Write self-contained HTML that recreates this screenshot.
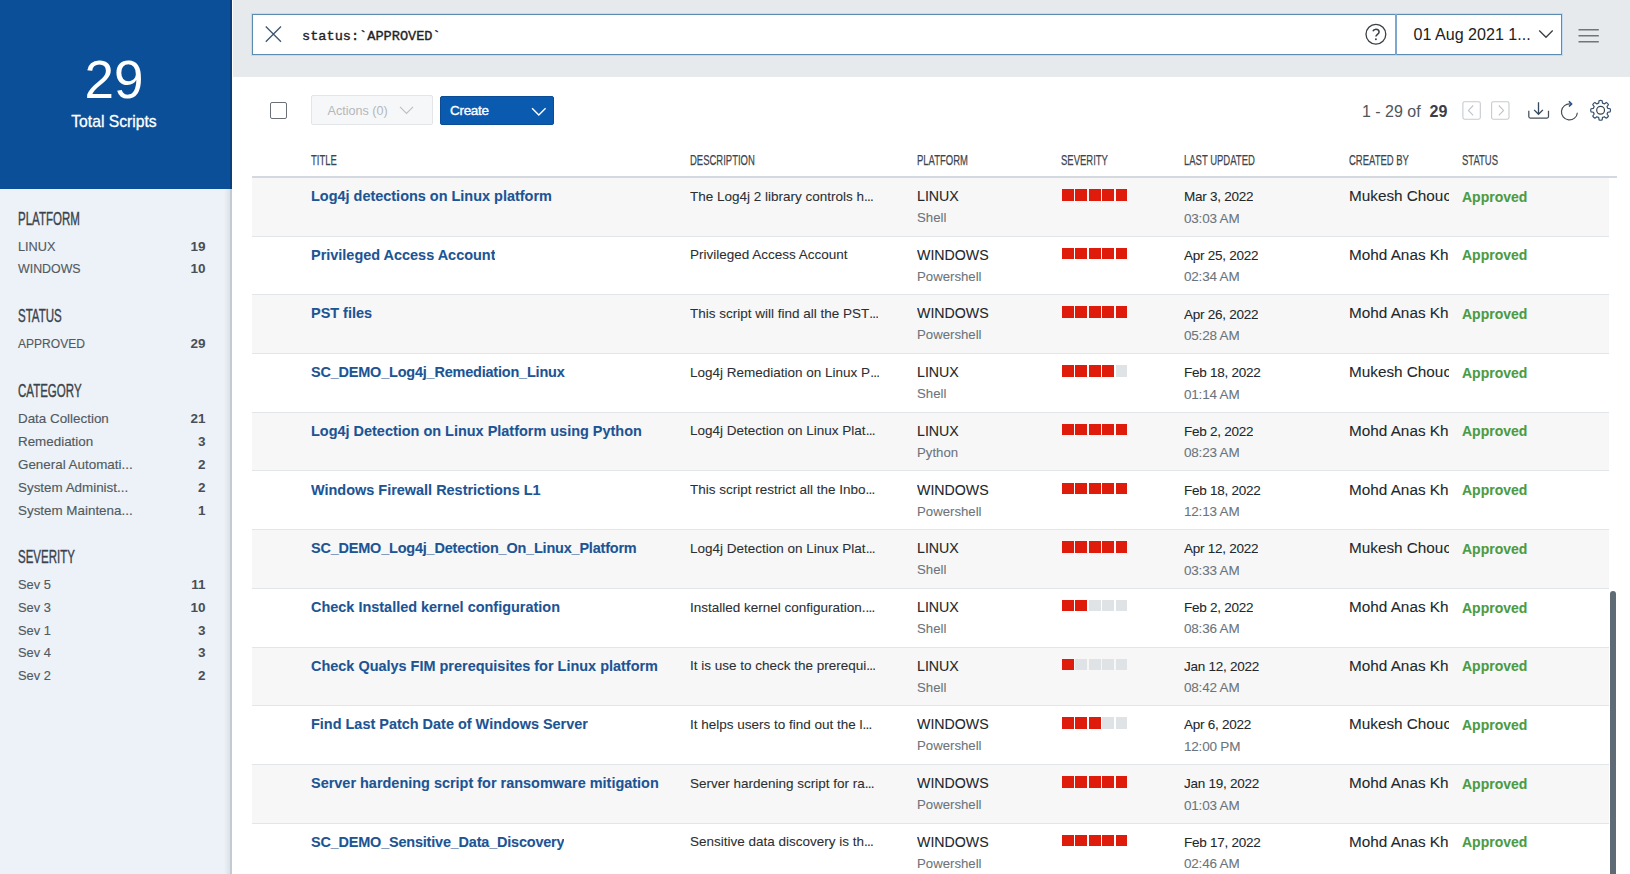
<!DOCTYPE html>
<html><head><meta charset="utf-8">
<style>
*{margin:0;padding:0;box-sizing:border-box}
html,body{width:1630px;height:874px;overflow:hidden;background:#fff;font-family:"Liberation Sans",sans-serif;position:relative}
.abs{position:absolute}
#side{position:absolute;left:0;top:0;width:232px;height:874px;background:#edf2f8}
#sideedge{position:absolute;left:224px;top:189px;width:8px;height:685px;background:linear-gradient(to right,rgba(200,208,216,0),rgba(200,208,216,.45) 70%,#c3cad1 75%,#c3cad1)}
#blueedge{position:absolute;left:230px;top:0;width:2px;height:189px;background:#0a3f7c}
#blue{position:absolute;left:0;top:0;width:232px;height:189px;background:#0b4f98}
#big{position:absolute;left:0;width:228px;top:49.5px;text-align:center;color:#fff;font-size:53px;line-height:60px}
#tot{position:absolute;left:0;width:228px;top:112px;text-align:center;color:#fff;font-size:15.7px;line-height:20px;-webkit-text-stroke:0.3px #fff}
.sh{position:absolute;left:18px;color:#3a434b;font-size:18px;line-height:16px;transform:scaleX(0.64);transform-origin:0 0;-webkit-text-stroke:0.4px #3a434b}
.si{position:absolute;left:18px;color:#525a61;font-size:13.4px;line-height:16px;white-space:nowrap;-webkit-text-stroke:0.15px currentColor}
.sn{position:absolute;left:0;width:205.5px;text-align:right;color:#484f56;font-size:13.5px;font-weight:bold;line-height:16px}
#hdr{position:absolute;left:233px;top:0;width:1397px;height:77px;background:#e7eaed}
#search{position:absolute;left:252px;top:13.5px;width:1310px;height:41.5px;background:#fff;border:1.2px solid #5b8db2;box-shadow:0 0 0 1px rgba(150,205,250,.45)}
#qdiv{position:absolute;left:1395px;top:14px;width:1.8px;height:40.5px;background:#7ea6d0}
#stext{position:absolute;left:302px;top:29px;font-family:"Liberation Mono",monospace;font-size:13.6px;line-height:16px;color:#1e2226;-webkit-text-stroke:0.35px #1e2226}
#date{position:absolute;left:1413.5px;top:24px;font-size:16.1px;line-height:20px;color:#222}
.c{position:absolute;white-space:nowrap;overflow:hidden;line-height:16px;-webkit-text-stroke:0.08px currentColor}
.row{position:absolute;left:252px;width:1357px;height:58.7px;border-bottom:1px solid #e1e6e9}
.row.odd{background:#f7f7f7}
.row.even{background:#fff}
.title{left:59px;top:10px;font-size:14.46px;font-weight:bold;color:#1c5494}
.desc{left:438px;top:10.7px;font-size:13.5px;color:#2b2f33}
.plat{left:665px;top:10px;font-size:14.2px;color:#22272b}
.plat2{left:665px;top:32px;font-size:13.2px;color:#6b747c}
.date{left:932px;top:11.2px;font-size:13.5px;letter-spacing:-0.25px;color:#22272b}
.date2{left:932px;top:32.6px;font-size:13.5px;letter-spacing:-0.2px;color:#6b747c}
.by{left:1097px;top:10px;font-size:15.3px;color:#22272b;width:100px}
.st{left:1210px;top:10.7px;font-size:14px;color:#4b9b44;font-weight:bold}
.sev{position:absolute;left:810px;top:11px;width:70px;height:12px}
.sev i{position:absolute;top:0;width:11.7px;height:11.6px}
.sev i.on{background:#df1b0b}
.sev i.off{background:#dfe3e6}
.th{position:absolute;top:153px;font-size:15.5px;line-height:14px;color:#3c4650;-webkit-text-stroke:0.25px #3c4650;transform:scaleX(0.612);transform-origin:0 0}
#hline{position:absolute;left:252px;top:176px;width:1365px;height:2px;background:#d3d9df}
#scroll{position:absolute;left:1610px;top:591px;width:6px;height:290px;border-radius:3px;background:#5f6b74}
#ov{position:absolute;left:0;top:0}
</style></head><body>
<div id="side"></div>
<div id="blue"></div>
<div id="sideedge"></div><div id="blueedge"></div>
<div id="big">29</div>
<div id="tot">Total Scripts</div>
<div class="sh" style="top:210.5px">PLATFORM</div>
<div class="si" style="top:238.5px;transform:scaleX(0.95);transform-origin:0 0">LINUX</div><div class="sn" style="top:238.5px">19</div>
<div class="si" style="top:261.4px;transform:scaleX(0.925);transform-origin:0 0">WINDOWS</div><div class="sn" style="top:261.4px">10</div>
<div class="sh" style="top:308px">STATUS</div>
<div class="si" style="top:336.1px;transform:scaleX(0.9);transform-origin:0 0">APPROVED</div><div class="sn" style="top:336.1px">29</div>
<div class="sh" style="top:383px">CATEGORY</div>
<div class="si" style="top:411.1px">Data Collection</div><div class="sn" style="top:411.1px">21</div>
<div class="si" style="top:433.9px">Remediation</div><div class="sn" style="top:433.9px">3</div>
<div class="si" style="top:456.8px">General Automati...</div><div class="sn" style="top:456.8px">2</div>
<div class="si" style="top:479.6px">System Administ...</div><div class="sn" style="top:479.6px">2</div>
<div class="si" style="top:502.5px">System Maintena...</div><div class="sn" style="top:502.5px">1</div>
<div class="sh" style="top:548.7px">SEVERITY</div>
<div class="si" style="top:576.8px;transform:scaleX(0.96);transform-origin:0 0">Sev 5</div><div class="sn" style="top:576.8px">11</div>
<div class="si" style="top:599.6px;transform:scaleX(0.96);transform-origin:0 0">Sev 3</div><div class="sn" style="top:599.6px">10</div>
<div class="si" style="top:622.5px;transform:scaleX(0.96);transform-origin:0 0">Sev 1</div><div class="sn" style="top:622.5px">3</div>
<div class="si" style="top:645.3px;transform:scaleX(0.96);transform-origin:0 0">Sev 4</div><div class="sn" style="top:645.3px">3</div>
<div class="si" style="top:668.2px;transform:scaleX(0.96);transform-origin:0 0">Sev 2</div><div class="sn" style="top:668.2px">2</div>

<div id="hdr"></div>
<div id="search"></div>
<div id="qdiv"></div>
<div id="stext">status:`APPROVED`</div>
<div id="date">01 Aug 2021 1...</div>

<div class="abs" style="left:269.8px;top:102.2px;width:16.8px;height:16.8px;border:1.7px solid #6b7076;border-radius:2px;background:#fff"></div>
<div class="abs" style="left:310.5px;top:95px;width:122px;height:30px;background:#f6f7f8;border:1px solid #e3e6e9;border-radius:2px"></div>
<div class="abs" style="left:327.5px;top:103px;font-size:12.6px;line-height:16px;color:#b3b8bd">Actions (0)</div>
<div class="abs" style="left:440px;top:96px;width:114px;height:29px;background:#0a5bb0;border:1px solid #0a4d96;border-radius:2px"></div>
<div class="abs" style="left:450px;top:103px;font-size:13.5px;letter-spacing:-0.3px;line-height:16px;color:#fff;-webkit-text-stroke:0.35px #fff">Create</div>

<div class="abs" style="left:1362px;top:104px;font-size:16px;line-height:16px;color:#4f565c">1 - 29 of &nbsp;<b style="color:#3a4046">29</b></div>

<div class="th" style="left:311px">TITLE</div>
<div class="th" style="left:690px">DESCRIPTION</div>
<div class="th" style="left:917px">PLATFORM</div>
<div class="th" style="left:1061px">SEVERITY</div>
<div class="th" style="left:1184px">LAST UPDATED</div>
<div class="th" style="left:1349px">CREATED BY</div>
<div class="th" style="left:1462px">STATUS</div>
<div id="hline"></div>
<div class="row odd" style="top:178.00px">
<div class="c title">Log4j detections on Linux platform</div>
<div class="c desc">The Log4j 2 library controls h<span style="letter-spacing:-0.75px">...</span></div>
<div class="c plat">LINUX</div><div class="c plat2">Shell</div>
<div class="sev"><i class="on" style="left:0.00px"></i><i class="on" style="left:13.45px"></i><i class="on" style="left:26.90px"></i><i class="on" style="left:40.35px"></i><i class="on" style="left:53.80px"></i></div>
<div class="c date">Mar 3, 2022</div><div class="c date2">03:03 AM</div>
<div class="c by">Mukesh Chouc</div>
<div class="c st">Approved</div>
</div>
<div class="row even" style="top:236.70px">
<div class="c title">Privileged Access Account</div>
<div class="c desc">Privileged Access Account</div>
<div class="c plat">WINDOWS</div><div class="c plat2">Powershell</div>
<div class="sev"><i class="on" style="left:0.00px"></i><i class="on" style="left:13.45px"></i><i class="on" style="left:26.90px"></i><i class="on" style="left:40.35px"></i><i class="on" style="left:53.80px"></i></div>
<div class="c date">Apr 25, 2022</div><div class="c date2">02:34 AM</div>
<div class="c by">Mohd Anas Kh</div>
<div class="c st">Approved</div>
</div>
<div class="row odd" style="top:295.40px">
<div class="c title">PST files</div>
<div class="c desc">This script will find all the PST<span style="letter-spacing:-0.75px">...</span></div>
<div class="c plat">WINDOWS</div><div class="c plat2">Powershell</div>
<div class="sev"><i class="on" style="left:0.00px"></i><i class="on" style="left:13.45px"></i><i class="on" style="left:26.90px"></i><i class="on" style="left:40.35px"></i><i class="on" style="left:53.80px"></i></div>
<div class="c date">Apr 26, 2022</div><div class="c date2">05:28 AM</div>
<div class="c by">Mohd Anas Kh</div>
<div class="c st">Approved</div>
</div>
<div class="row even" style="top:354.10px">
<div class="c title" style="letter-spacing:-0.19px">SC_DEMO_Log4j_Remediation_Linux</div>
<div class="c desc">Log4j Remediation on Linux P<span style="letter-spacing:-0.75px">...</span></div>
<div class="c plat">LINUX</div><div class="c plat2">Shell</div>
<div class="sev"><i class="on" style="left:0.00px"></i><i class="on" style="left:13.45px"></i><i class="on" style="left:26.90px"></i><i class="on" style="left:40.35px"></i><i class="off" style="left:53.80px"></i></div>
<div class="c date">Feb 18, 2022</div><div class="c date2">01:14 AM</div>
<div class="c by">Mukesh Chouc</div>
<div class="c st">Approved</div>
</div>
<div class="row odd" style="top:412.80px">
<div class="c title">Log4j Detection on Linux Platform using Python</div>
<div class="c desc">Log4j Detection on Linux Plat<span style="letter-spacing:-0.75px">...</span></div>
<div class="c plat">LINUX</div><div class="c plat2">Python</div>
<div class="sev"><i class="on" style="left:0.00px"></i><i class="on" style="left:13.45px"></i><i class="on" style="left:26.90px"></i><i class="on" style="left:40.35px"></i><i class="on" style="left:53.80px"></i></div>
<div class="c date">Feb 2, 2022</div><div class="c date2">08:23 AM</div>
<div class="c by">Mohd Anas Kh</div>
<div class="c st">Approved</div>
</div>
<div class="row even" style="top:471.50px">
<div class="c title">Windows Firewall Restrictions L1</div>
<div class="c desc">This script restrict all the Inbo<span style="letter-spacing:-0.75px">...</span></div>
<div class="c plat">WINDOWS</div><div class="c plat2">Powershell</div>
<div class="sev"><i class="on" style="left:0.00px"></i><i class="on" style="left:13.45px"></i><i class="on" style="left:26.90px"></i><i class="on" style="left:40.35px"></i><i class="on" style="left:53.80px"></i></div>
<div class="c date">Feb 18, 2022</div><div class="c date2">12:13 AM</div>
<div class="c by">Mohd Anas Kh</div>
<div class="c st">Approved</div>
</div>
<div class="row odd" style="top:530.20px">
<div class="c title" style="letter-spacing:-0.19px">SC_DEMO_Log4j_Detection_On_Linux_Platform</div>
<div class="c desc">Log4j Detection on Linux Plat<span style="letter-spacing:-0.75px">...</span></div>
<div class="c plat">LINUX</div><div class="c plat2">Shell</div>
<div class="sev"><i class="on" style="left:0.00px"></i><i class="on" style="left:13.45px"></i><i class="on" style="left:26.90px"></i><i class="on" style="left:40.35px"></i><i class="on" style="left:53.80px"></i></div>
<div class="c date">Apr 12, 2022</div><div class="c date2">03:33 AM</div>
<div class="c by">Mukesh Chouc</div>
<div class="c st">Approved</div>
</div>
<div class="row even" style="top:588.90px">
<div class="c title">Check Installed kernel configuration</div>
<div class="c desc">Installed kernel configuration.<span style="letter-spacing:-0.75px">...</span></div>
<div class="c plat">LINUX</div><div class="c plat2">Shell</div>
<div class="sev"><i class="on" style="left:0.00px"></i><i class="on" style="left:13.45px"></i><i class="off" style="left:26.90px"></i><i class="off" style="left:40.35px"></i><i class="off" style="left:53.80px"></i></div>
<div class="c date">Feb 2, 2022</div><div class="c date2">08:36 AM</div>
<div class="c by">Mohd Anas Kh</div>
<div class="c st">Approved</div>
</div>
<div class="row odd" style="top:647.60px">
<div class="c title">Check Qualys FIM prerequisites for Linux platform</div>
<div class="c desc">It is use to check the prerequi<span style="letter-spacing:-0.75px">...</span></div>
<div class="c plat">LINUX</div><div class="c plat2">Shell</div>
<div class="sev"><i class="on" style="left:0.00px"></i><i class="off" style="left:13.45px"></i><i class="off" style="left:26.90px"></i><i class="off" style="left:40.35px"></i><i class="off" style="left:53.80px"></i></div>
<div class="c date">Jan 12, 2022</div><div class="c date2">08:42 AM</div>
<div class="c by">Mohd Anas Kh</div>
<div class="c st">Approved</div>
</div>
<div class="row even" style="top:706.30px">
<div class="c title">Find Last Patch Date of Windows Server</div>
<div class="c desc">It helps users to find out the l<span style="letter-spacing:-0.75px">...</span></div>
<div class="c plat">WINDOWS</div><div class="c plat2">Powershell</div>
<div class="sev"><i class="on" style="left:0.00px"></i><i class="on" style="left:13.45px"></i><i class="on" style="left:26.90px"></i><i class="off" style="left:40.35px"></i><i class="off" style="left:53.80px"></i></div>
<div class="c date">Apr 6, 2022</div><div class="c date2">12:00 PM</div>
<div class="c by">Mukesh Chouc</div>
<div class="c st">Approved</div>
</div>
<div class="row odd" style="top:765.00px">
<div class="c title">Server hardening script for ransomware mitigation</div>
<div class="c desc">Server hardening script for ra<span style="letter-spacing:-0.75px">...</span></div>
<div class="c plat">WINDOWS</div><div class="c plat2">Powershell</div>
<div class="sev"><i class="on" style="left:0.00px"></i><i class="on" style="left:13.45px"></i><i class="on" style="left:26.90px"></i><i class="on" style="left:40.35px"></i><i class="on" style="left:53.80px"></i></div>
<div class="c date">Jan 19, 2022</div><div class="c date2">01:03 AM</div>
<div class="c by">Mohd Anas Kh</div>
<div class="c st">Approved</div>
</div>
<div class="row even" style="top:823.70px">
<div class="c title" style="letter-spacing:-0.19px">SC_DEMO_Sensitive_Data_Discovery</div>
<div class="c desc">Sensitive data discovery is th<span style="letter-spacing:-0.75px">...</span></div>
<div class="c plat">WINDOWS</div><div class="c plat2">Powershell</div>
<div class="sev"><i class="on" style="left:0.00px"></i><i class="on" style="left:13.45px"></i><i class="on" style="left:26.90px"></i><i class="on" style="left:40.35px"></i><i class="on" style="left:53.80px"></i></div>
<div class="c date">Feb 17, 2022</div><div class="c date2">02:46 AM</div>
<div class="c by">Mohd Anas Kh</div>
<div class="c st">Approved</div>
</div>

<div id="scroll"></div>
<svg id="ov" width="1630" height="874" viewBox="0 0 1630 874" fill="none">
<path d="M265.8 26.5L281 41.7M281 26.5L265.8 41.7" stroke="#3d5670" stroke-width="1.3"/>
<circle cx="1375.9" cy="34.3" r="9.9" stroke="#3a3f44" stroke-width="1.3"/>
<path d="M1372.9 31.3C1373.4 29.9 1374.5 29.2 1375.9 29.2C1377.9 29.2 1379.1 30.5 1379.1 32.1C1379.1 34.2 1375.9 34.6 1375.9 36.6" stroke="#3a3f44" stroke-width="1.5"/>
<circle cx="1375.9" cy="39.3" r="0.95" fill="#3a3f44"/>
<path d="M1539.2 30.5L1546 37.3L1552.7 30.5" stroke="#3a3f44" stroke-width="1.3"/>
<path d="M1578.5 29.8H1598.8M1578.5 35.8H1598.8M1578.5 41.8H1598.8" stroke="#6f757b" stroke-width="1.5"/>
<path d="M400 106.8L406.5 113.5L413 106.8" stroke="#bcc1c6" stroke-width="1.2"/>
<path d="M532.1 108.2L538.8 114.9L545.6 108.2" stroke="#fff" stroke-width="1.4"/>
<rect x="1462.9" y="101.8" width="17.4" height="17.4" rx="1.6" stroke="#c6cbd0" stroke-width="1.1"/>
<rect x="1491.6" y="101.8" width="17.4" height="17.4" rx="1.6" stroke="#c6cbd0" stroke-width="1.1"/>
<path d="M1473.2 105.5L1468.4 110.4L1473.2 115.3" stroke="#bfc4c8" stroke-width="1.1"/>
<path d="M1498.8 105.5L1503.6 110.4L1498.8 115.3" stroke="#bfc4c8" stroke-width="1.1"/>
<path d="M1528.8 110.8V116.5Q1528.8 118 1530.3 118H1547Q1548.5 118 1548.5 116.5V110.8" stroke="#474f57" stroke-width="1.25"/>
<path d="M1538.5 102.3V114.2M1534.1 109.9L1538.5 114.3L1542.9 109.9" stroke="#34475c" stroke-width="1.3"/>
<path d="M1577.4 112.7A8 8 0 1 1 1570.5 104" stroke="#464e56" stroke-width="1.2"/>
<path d="M1568.9 101.2L1571.6 103.9L1569 106.5" stroke="#2a4f7e" stroke-width="1.6" stroke-linejoin="miter"/>
<path d="M1598.68,103.15 L1599.08,100.72 Q1600.60,100.00 1602.12,100.72 L1602.52,103.15 A7.4,7.4 0 0 1 1604.30,103.89 L1606.30,102.45 Q1607.88,103.02 1608.45,104.60 L1607.01,106.60 A7.4,7.4 0 0 1 1607.75,108.38 L1610.18,108.78 Q1610.90,110.30 1610.18,111.82 L1607.75,112.22 A7.4,7.4 0 0 1 1607.01,114.00 L1608.45,116.00 Q1607.88,117.58 1606.30,118.15 L1604.30,116.71 A7.4,7.4 0 0 1 1602.52,117.45 L1602.12,119.88 Q1600.60,120.60 1599.08,119.88 L1598.68,117.45 A7.4,7.4 0 0 1 1596.90,116.71 L1594.90,118.15 Q1593.32,117.58 1592.75,116.00 L1594.19,114.00 A7.4,7.4 0 0 1 1593.45,112.22 L1591.02,111.82 Q1590.30,110.30 1591.02,108.78 L1593.45,108.38 A7.4,7.4 0 0 1 1594.19,106.60 L1592.75,104.60 Q1593.32,103.02 1594.90,102.45 L1596.90,103.89 A7.4,7.4 0 0 1 1598.68,103.15 Z" stroke="#34506e" stroke-width="1.2" stroke-linejoin="round"/>
<circle cx="1600.6" cy="110.3" r="3.9" stroke="#3a4550" stroke-width="1.2"/>
</svg>
</body></html>
